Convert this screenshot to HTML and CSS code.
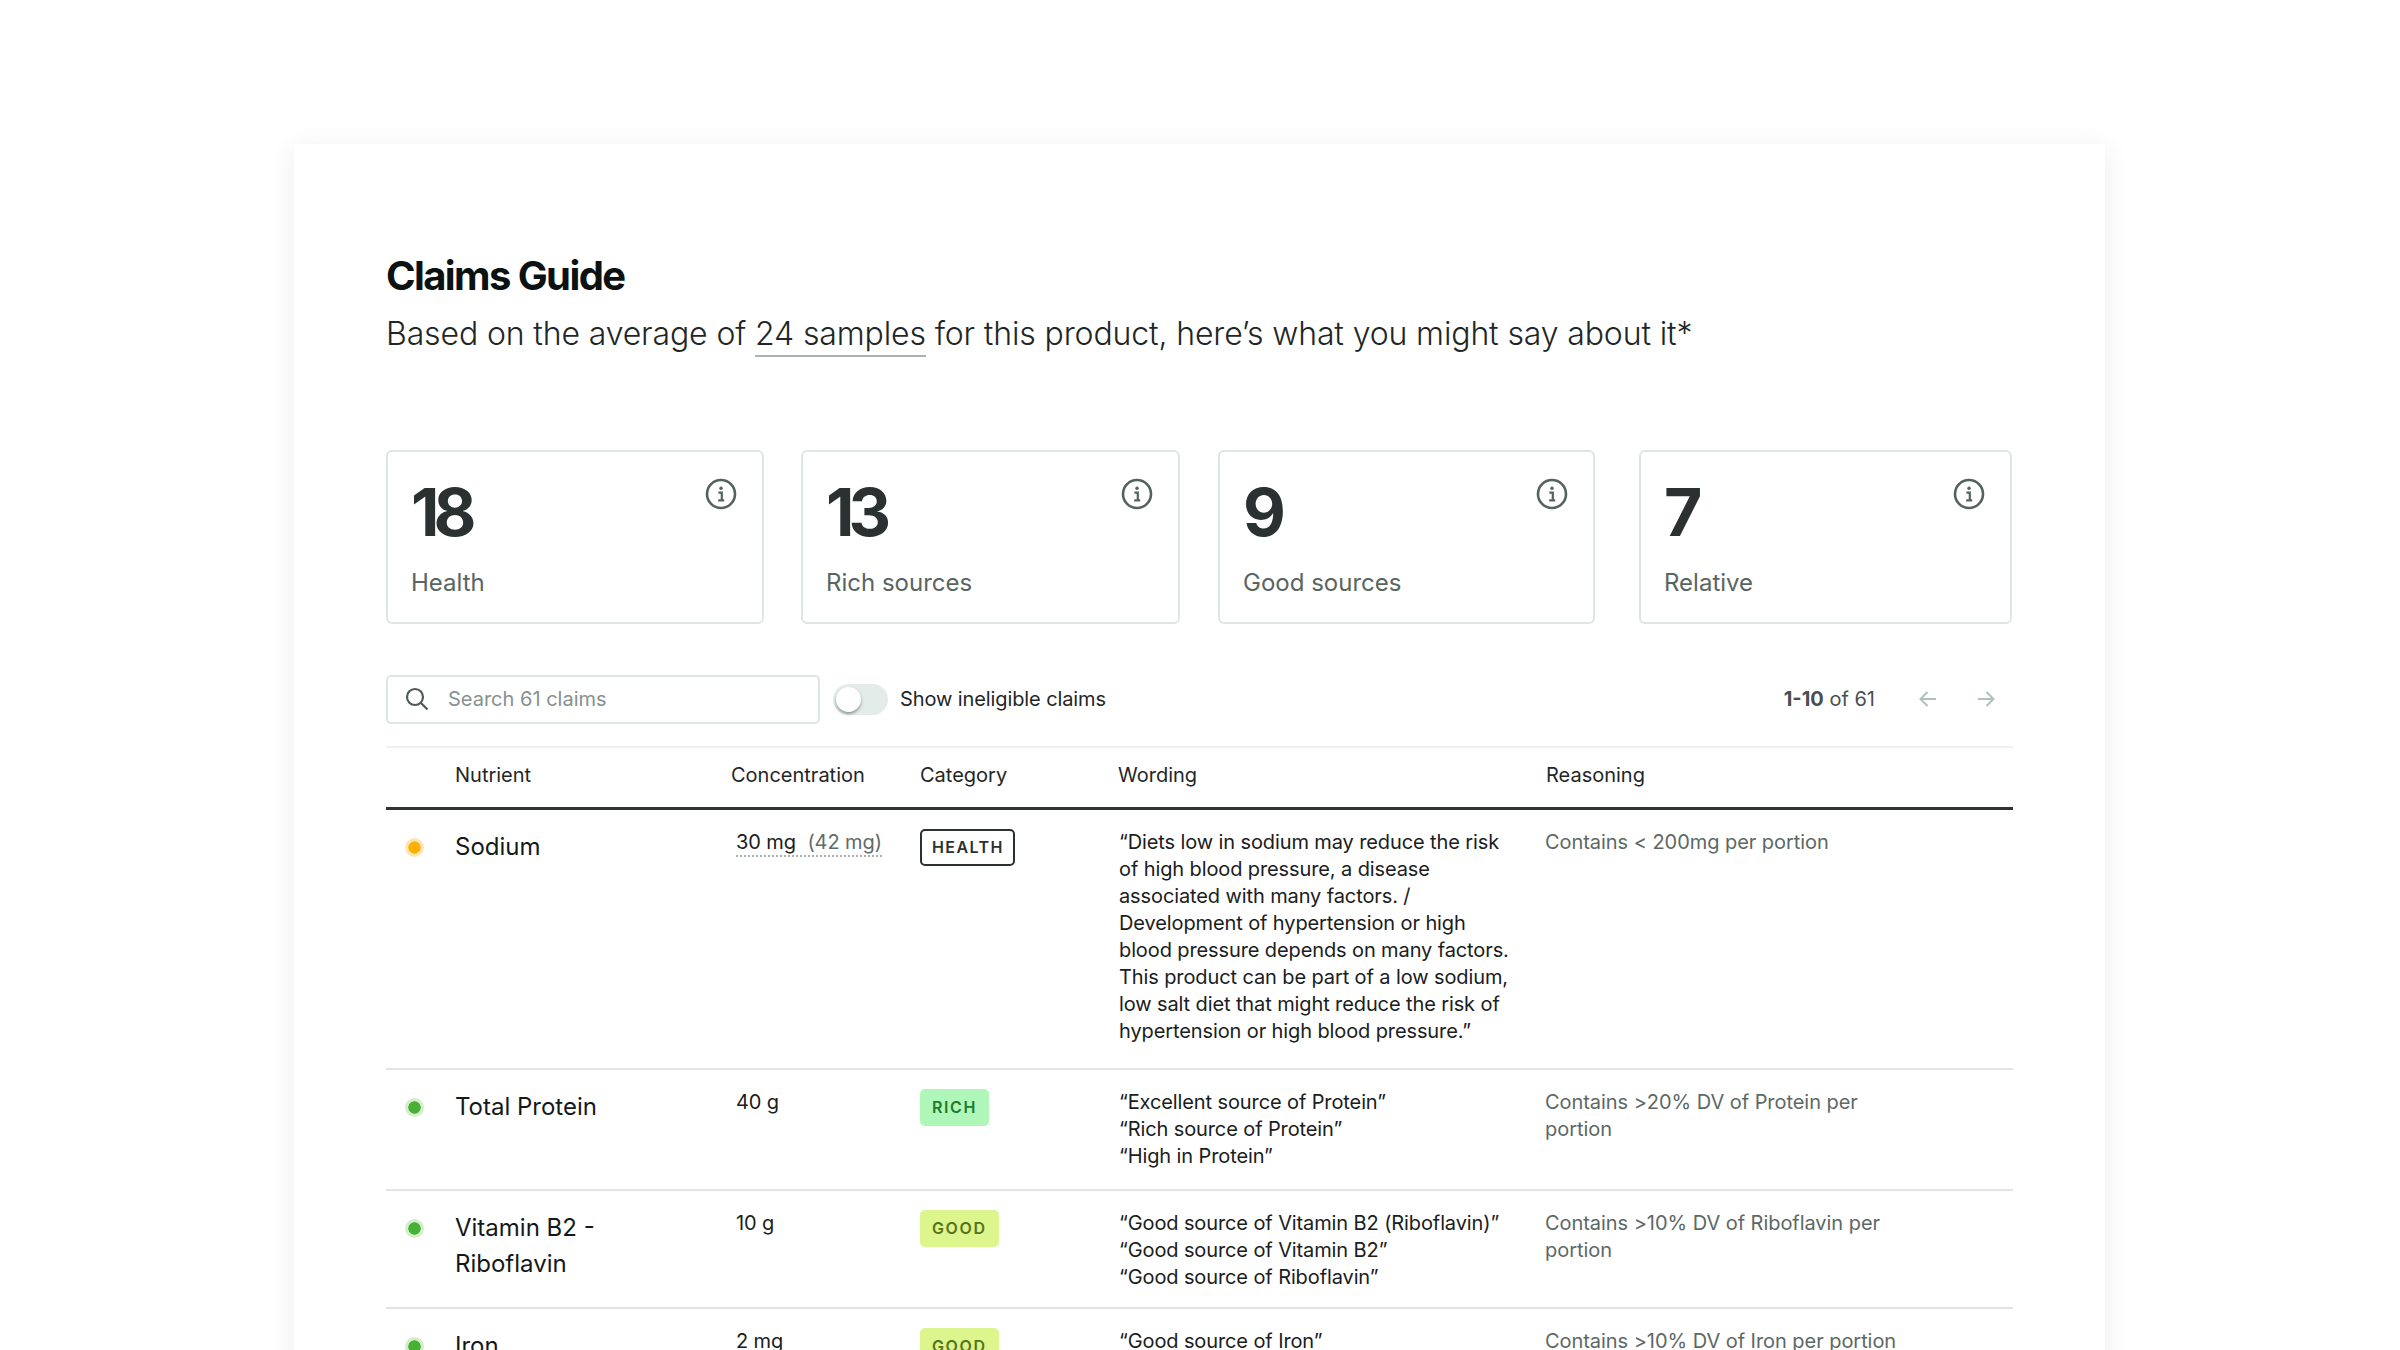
FILE: index.html
```html
<!DOCTYPE html>
<html lang="en">
<head>
<meta charset="utf-8">
<title>Claims Guide</title>
<link rel="stylesheet" href="styles.css">
</head>
<body>
<svg class="defs" width="0" height="0" aria-hidden="true">
  <symbol id="info" viewBox="0 0 32 32">
    <circle cx="16" cy="16" r="14" fill="none" stroke="currentColor" stroke-width="2.6"/>
    <circle cx="16" cy="10.2" r="1.7" fill="currentColor"/>
    <path d="M13.4 14.6h3.4v7.6M13.2 22.4h6" fill="none" stroke="currentColor" stroke-width="2.2"/>
  </symbol>
</svg>
<main class="sheet">
  <h1 class="title">Claims Guide</h1>
  <p class="lead">Based on the average of <span class="link">24 samples</span> for this product, here’s what you might say about it*</p>

  <section class="stats">
    <article class="stat"><div class="num">18</div><div class="lbl">Health</div><svg class="info"><use href="#info"/></svg></article>
    <article class="stat"><div class="num">13</div><div class="lbl">Rich sources</div><svg class="info"><use href="#info"/></svg></article>
    <article class="stat stat-third"><div class="num">9</div><div class="lbl">Good sources</div><svg class="info"><use href="#info"/></svg></article>
    <article class="stat stat-last"><div class="num">7</div><div class="lbl">Relative</div><svg class="info"><use href="#info"/></svg></article>
  </section>

  <section class="toolbar">
    <div class="search">
      <svg class="search-ico" viewBox="0 0 24 24"><circle cx="10" cy="10" r="8" fill="none" stroke="currentColor" stroke-width="2.2"/><path d="M16 16l6.5 6.5" stroke="currentColor" stroke-width="2.2" fill="none"/></svg>
      <span class="placeholder">Search 61 claims</span>
    </div>
    <div class="toggle"><span class="knob"></span></div>
    <span class="toggle-label">Show ineligible claims</span>
    <div class="pager">
      <span class="count"><b>1-10</b> of 61</span>
      <svg class="arrow arrow-prev" viewBox="0 0 20 20"><path d="M18 10H2.5M9.5 3l-7 7 7 7" fill="none" stroke="currentColor" stroke-width="2"/></svg>
      <svg class="arrow" viewBox="0 0 20 20"><path d="M2 10h15.5M10.5 3l7 7-7 7" fill="none" stroke="currentColor" stroke-width="2"/></svg>
    </div>
  </section>

  <section class="table">
    <div class="thead">
      <span>Nutrient</span><span>Concentration</span><span>Category</span><span>Wording</span><span>Reasoning</span>
    </div>
    <div class="row row-sodium">
      <span class="dot dot-amber"></span>
      <div class="nutrient">Sodium</div>
      <div class="conc"><span class="dotted">30 mg <span class="muted">(42 mg)</span></span></div>
      <div><span class="badge badge-health">HEALTH</span></div>
      <div class="wording">“Diets low in sodium may reduce the risk of high blood pressure, a disease associated with many factors. / Development of hypertension or high blood pressure depends on many factors. This product can be part of a low sodium, low salt diet that might reduce the risk of hypertension or high blood pressure.”</div>
      <div class="reason">Contains &lt; 200mg per portion</div>
    </div>
    <div class="row row-protein">
      <span class="dot dot-green"></span>
      <div class="nutrient">Total Protein</div>
      <div class="conc">40 g</div>
      <div><span class="badge badge-rich">RICH</span></div>
      <div class="wording">“Excellent source of Protein”<br>“Rich source of Protein”<br>“High in Protein”</div>
      <div class="reason">Contains &gt;20% DV of Protein per portion</div>
    </div>
    <div class="row row-b2">
      <span class="dot dot-green"></span>
      <div class="nutrient">Vitamin B2 - Riboflavin</div>
      <div class="conc">10 g</div>
      <div><span class="badge badge-good">GOOD</span></div>
      <div class="wording">“Good source of Vitamin B2 (Riboflavin)”<br>“Good source of Vitamin B2”<br>“Good source of Riboflavin”</div>
      <div class="reason">Contains &gt;10% DV of Riboflavin per portion</div>
    </div>
    <div class="row">
      <span class="dot dot-green"></span>
      <div class="nutrient">Iron</div>
      <div class="conc">2 mg</div>
      <div><span class="badge badge-good">GOOD</span></div>
      <div class="wording">“Good source of Iron”<br>“Good source of Iron”</div>
      <div class="reason">Contains &gt;10% DV of Iron per portion</div>
    </div>
  </section>
</main>
</body>
</html>
```
FILE: styles.css
```css
* { box-sizing: border-box; }
html, body { margin: 0; height: 1350px; overflow: hidden; background: #fff; }
body { font-family: Inter, "Liberation Sans", sans-serif; color: #1d2423; padding: 144px 295px 0 294px; }
.defs { position: absolute; }

.sheet { height: 1400px; background: #fff; padding: 108px 92px 0; box-shadow: 0 4px 24px rgba(40, 60, 55, .09); }
.title { margin: 0; font-size: 40px; line-height: 48px; font-weight: 700; letter-spacing: -1.6px; color: #0c1211; }
.lead { margin: 10.5px 0 0; font-size: 32px; line-height: 46px; font-weight: 340; letter-spacing: -.13px; color: #1f2726; }
.link { border-bottom: 2px solid #a9b5b2; padding-bottom: 2px; }

.stats { display: grid; grid-template-columns: 378px 379px 378px 380px; column-gap: 37px; margin-top: 93px; }
.stat { position: relative; height: 174px; border: 2px solid #dfe5e3; border-radius: 6px; padding: 20px 23px 0; }
.stat-third { justify-self: end; width: 377px; }
.stat-last { justify-self: end; width: 373px; }
.num { font-size: 66px; line-height: 80px; font-weight: 700; letter-spacing: -6px; color: #2a3130; }
.lbl { margin-top: 14px; font-size: 24px; line-height: 34px; font-weight: 400; color: #59655f; }
.info { position: absolute; top: 26px; right: 25px; width: 32px; height: 32px; color: #55625f; }

.toolbar { display: flex; align-items: center; height: 49px; margin-top: 51px; }
.search { display: flex; align-items: center; width: 434px; height: 49px; border: 2px solid #dfe5e3; border-radius: 5px; padding-left: 17px; }
.search-ico { width: 24px; height: 24px; color: #4f5b58; }
.placeholder { margin-left: 19px; font-size: 20px; font-weight: 400; color: #87918f; }
.toggle { width: 55px; height: 31px; margin-left: 13px; border-radius: 16px; background: #e4ecea; padding: 3px; }
.knob { display: block; width: 25px; height: 25px; border-radius: 50%; background: #fff; box-shadow: 0 2px 3px rgba(40, 50, 48, .45); }
.toggle-label { margin-left: 12px; font-size: 20px; font-weight: 400; letter-spacing: -.1px; color: #1f2726; }
.pager { display: flex; align-items: center; margin-left: auto; padding-right: 17px; color: #4a4f4e; }
.count { font-size: 20px; font-weight: 400; }
.count b { font-weight: 700; }
.arrow { width: 20px; height: 20px; margin-left: 38px; color: #b3c1be; }
.arrow-prev { margin-left: 43px; }

.table { margin-top: 22px; }
.thead { display: grid; grid-template-columns: 276px 189px 198px 428px 1fr; height: 64px; padding: 0 0 5px 69px; border-top: 2px solid #eef1f0; border-bottom: 3px solid #2e3433; align-items: center; font-size: 20px; font-weight: 400; color: #1f2726; }
.row { display: grid; grid-template-columns: 68px 282px 183px 198px 428px 1fr; align-items: start; padding: 19px 0 17px; border-bottom: 2px solid #e0e5e3; }
.row-sodium { height: 260px; }
.row-protein { height: 121px; }
.row-b2 { height: 118px; }
.dot { justify-self: start; width: 13px; height: 13px; margin: 9px 0 0 18.5px; border-radius: 50%; box-sizing: content-box; border: 3px solid; background-clip: padding-box; }
.dot-amber { background-color: #ffb000; border-color: #fde6b5; }
.dot-green { background-color: #46b134; border-color: #d5eec9; }
.nutrient { font-size: 24px; line-height: 36.5px; font-weight: 400; color: #14191a; padding: 0 60px 0 1px; }
.conc { font-size: 20px; line-height: 27px; font-weight: 400; letter-spacing: -.1px; color: #1a2020; }
.dotted { border-bottom: 2px dotted #a8b2af; white-space: nowrap; display: inline-block; line-height: 26px; }
.muted { color: #5f6b68; margin-left: 6px; }
.badge { display: inline-block; height: 37px; line-height: 37px; padding: 0 12px; border-radius: 5px; font-size: 16px; font-weight: 600; letter-spacing: 1.6px; margin: 0 0 0 1px; }
.badge-health { color: #2a3130; border: 2px solid #2a3130; line-height: 33px; padding: 0 9px 0 10px; letter-spacing: 1.4px; }
.badge-rich { background: #aef7b8; color: #1f7a2c; }
.badge-good { background: #dcf58d; color: #55741a; }
.wording { font-size: 20px; line-height: 27px; font-weight: 400; letter-spacing: -.11px; color: #1a2020; padding: 0 30px 0 2px; }
.reason { font-size: 20px; line-height: 27px; font-weight: 400; letter-spacing: -.05px; color: #5c6865; max-width: 360px; }
```
